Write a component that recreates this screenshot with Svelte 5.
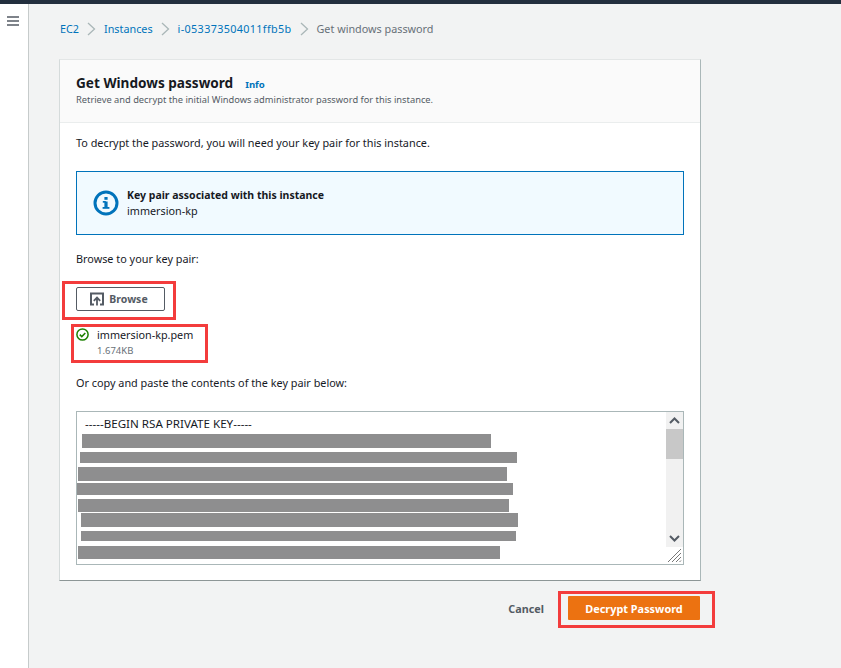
<script>
	// redaction bars over the key text, offsets relative to the textarea box
	const redactions = [
		{ left: 5, top: 22, width: 409, height: 14 },
		{ left: 3, top: 40, width: 437, height: 11 },
		{ left: 1, top: 55, width: 429, height: 14 },
		{ left: 0, top: 71, width: 436, height: 12 },
		{ left: 1, top: 87, width: 431, height: 13 },
		{ left: 4, top: 101, width: 437, height: 14 },
		{ left: 4, top: 119, width: 435, height: 10 },
		{ left: 1, top: 134, width: 422, height: 13 }
	];

	const crumbs = [
		{ label: 'EC2', cls: 'link' },
		{ label: 'Instances', cls: 'link' },
		{ label: 'i-053373504011ffb5b', cls: 'link id' }
	];
</script>

<div class="topbar"></div>
<div class="shell">
	<aside class="rail">
		<svg class="burger" width="12" height="10" viewBox="0 0 12 10">
			<path d="M0 1h12M0 5h12M0 9h12" stroke="#545b64" stroke-width="1.6" fill="none" />
		</svg>
	</aside>
	<main class="content">
		<nav class="crumbs">
			{#each crumbs as crumb}
				<span class={crumb.cls}>{crumb.label}</span>
				<svg class="sep" width="9" height="14" viewBox="0 0 9 14">
					<path d="M1 1l6.5 6L1 13" stroke="#aab7b8" stroke-width="1.3" fill="none" />
				</svg>
			{/each}
			<span class="current">Get windows password</span>
		</nav>

		<section class="card">
			<header class="card-head">
				<div class="title-row">
					<h1>Get Windows password</h1>
					<span class="info">Info</span>
				</div>
				<p>Retrieve and decrypt the initial Windows administrator password for this instance.</p>
			</header>
			<div class="card-body">
				<p class="line first">To decrypt the password, you will need your key pair for this instance.</p>

				<div class="alert">
					<svg width="26" height="26" viewBox="0 0 26 26">
						<circle cx="13" cy="13" r="11" fill="none" stroke="#0073bb" stroke-width="3" />
						<rect x="11.4" y="11.5" width="3.2" height="6.5" fill="#0073bb" />
						<rect x="9.6" y="17" width="6.8" height="1.8" fill="#0073bb" />
						<rect x="9.8" y="11" width="3" height="1.7" fill="#0073bb" />
						<rect x="11.4" y="7" width="3.2" height="2.8" fill="#0073bb" />
					</svg>
					<div>
						<div class="alert-title">Key pair associated with this instance</div>
						<div class="alert-text">immersion-kp</div>
					</div>
				</div>

				<p class="line browse-label">Browse to your key pair:</p>

				<div class="browse-wrap">
					<button class="browse">
						<svg width="14" height="14" viewBox="0 0 14 14">
							<path d="M4 12.5H1V1.5h12v11h-3" fill="none" stroke="#545b64" stroke-width="2" />
							<path d="M7 13.5V6M3.8 8.8L7 5.5l3.2 3.3" fill="none" stroke="#545b64" stroke-width="1.8" />
						</svg>
						Browse
					</button>
				</div>

				<div class="file">
					<svg width="13" height="13" viewBox="0 0 13 13">
						<circle cx="6.5" cy="6.5" r="5.6" fill="none" stroke="#1d8102" stroke-width="1.5" />
						<path d="M3.8 6.6l2 2 3.5-3.7" fill="none" stroke="#1d8102" stroke-width="1.5" />
					</svg>
					<div>
						<div class="file-name">immersion-kp.pem</div>
						<div class="file-size">1.674KB</div>
					</div>
				</div>

				<p class="line paste-label">Or copy and paste the contents of the key pair below:</p>

				<div class="keybox">
					<div class="keytext">-----BEGIN RSA PRIVATE KEY-----</div>
					{#each redactions as r}
						<div
							class="redact"
							style="left:{r.left}px;top:{r.top}px;width:{r.width}px;height:{r.height}px"
						></div>
					{/each}
					<div class="scrollbar">
						<svg class="arrow" width="17" height="17" viewBox="0 0 17 17">
							<path d="M4 11l4.5-4.5L13 11" fill="none" stroke="#545b64" stroke-width="2" />
						</svg>
						<div class="track"><div class="thumb"></div></div>
						<svg class="arrow" width="17" height="17" viewBox="0 0 17 17">
							<path d="M4 6l4.5 4.5L13 6" fill="none" stroke="#545b64" stroke-width="2" />
						</svg>
					</div>
					<svg class="grip" width="15" height="15" viewBox="0 0 15 15">
						<path d="M1 14L14 1M5 14L14 5M9 14l5-5M12.5 14l1.5-1.5" stroke="#777" stroke-width="1" fill="none" />
					</svg>
				</div>
			</div>
		</section>

		<footer class="actions">
			<button class="cancel">Cancel</button>
			<button class="primary">Decrypt Password</button>
		</footer>
	</main>
</div>

<div class="mark mark-browse"></div>
<div class="mark mark-file"></div>
<div class="mark mark-decrypt"></div>

<style>
	:global(body) {
		margin: 0;
		background: #f2f3f3;
		font-family: 'Noto Sans', 'Open Sans', sans-serif;
		font-size: 11px;
		color: #16191f;
	}

	.topbar {
		height: 4px;
		background: #232f3e;
	}

	.shell {
		display: flex;
		height: 664px;
		overflow: hidden;
	}

	.rail {
		width: 29px;
		flex: none;
		background: #fff;
		border-right: 1px solid #c6cbcb;
		padding-top: 12px;
		padding-left: 7px;
		box-sizing: border-box;
	}

	.burger {
		display: block;
	}

	.content {
		flex: none;
		width: 673px;
		padding-left: 30px;
	}

	.crumbs {
		display: flex;
		align-items: center;
		gap: 8px;
		height: 16px;
		margin-top: 17px;
		padding-left: 1px;
		font-size: 10.8px;
		line-height: 16px;
	}

	.link {
		color: #0073bb;
	}

	.id {
		letter-spacing: 0.35px;
	}

	.current {
		color: #687078;
	}

	.sep {
		flex: none;
	}

	.card {
		margin-top: 22px;
		width: 642px;
		height: 522px;
		box-sizing: border-box;
		background: #fff;
		border-top: 1px solid #e3e6e6;
		border-left: 1px solid #d5dbdb;
		border-right: 1px solid #aab7b8;
		border-bottom: 1px solid #8d9696;
	}

	.card-head {
		height: 63px;
		box-sizing: border-box;
		background: #fafafa;
		border-bottom: 1px solid #eaeded;
		padding: 13px 16px 0;
	}

	.title-row {
		display: flex;
		align-items: baseline;
		gap: 12px;
		height: 20px;
	}

	h1 {
		margin: 0;
		font-size: 13.6px;
		line-height: 20px;
		font-weight: 700;
		color: #16191f;
	}

	.info {
		font-size: 9.6px;
		font-weight: 700;
		color: #0073bb;
	}

	.card-head p {
		margin: 0;
		font-size: 9.3px;
		line-height: 14px;
		color: #545b64;
	}

	.card-body {
		padding: 0 16px;
	}

	.line {
		margin: 0;
		font-size: 10.85px;
		line-height: 16px;
	}

	.first {
		padding-top: 12px;
	}

	.alert {
		display: flex;
		align-items: center;
		gap: 7px;
		margin-top: 20px;
		height: 64px;
		box-sizing: border-box;
		padding-left: 16px;
		background: #f1faff;
		border: 1px solid #0073bb;
	}

	.alert svg {
		flex: none;
		margin-right: 1px;
	}

	.alert-title {
		font-weight: 700;
		font-size: 10.5px;
		line-height: 16px;
	}

	.alert-text {
		font-size: 10.8px;
		line-height: 16px;
	}

	.browse-label {
		margin-top: 16px;
	}

	.browse-wrap {
		margin-top: 20px;
	}

	.browse {
		display: flex;
		align-items: center;
		justify-content: center;
		gap: 5px;
		width: 89px;
		height: 24px;
		padding: 0 3px 0 0;
		box-sizing: border-box;
		background: #fff;
		border: 1px solid #545b64;
		border-radius: 2px;
		font-family: inherit;
		font-size: 10.5px;
		font-weight: 700;
		color: #545b64;
	}

	.file {
		display: flex;
		gap: 8px;
		margin-top: 16px;
	}

	.file svg {
		flex: none;
		margin-top: 1px;
	}

	.file-name {
		font-size: 10.8px;
		line-height: 15px;
	}

	.file-size {
		font-size: 9.5px;
		line-height: 15px;
		margin-top: 1px;
		color: #687078;
	}

	.paste-label {
		margin-top: 17px;
	}

	.keybox {
		position: relative;
		margin-top: 20px;
		height: 154px;
		width: 608px;
		box-sizing: border-box;
		border: 1px solid #aab7b8;
		background: #fff;
	}

	.keytext {
		padding: 4px 0 0 8px;
		font-size: 11.6px;
		line-height: 15px;
	}

	.redact {
		position: absolute;
		background: #8e8e8f;
	}

	.scrollbar {
		position: absolute;
		top: 0;
		right: 0;
		width: 17px;
		height: 135px;
		display: flex;
		flex-direction: column;
		background: #f1f1f1;
	}

	.arrow {
		flex: none;
		display: block;
	}

	.track {
		flex: 1;
	}

	.thumb {
		height: 30px;
		background: #c8c8c8;
	}

	.grip {
		position: absolute;
		right: 1px;
		bottom: 1px;
	}

	.actions {
		display: flex;
		justify-content: flex-end;
		align-items: center;
		gap: 24px;
		margin-top: 15px;
		width: 641px;
	}

	.cancel {
		padding: 0;
		border: 0;
		background: none;
		font-family: inherit;
		font-size: 10.8px;
		font-weight: 700;
		color: #545b64;
	}

	.primary {
		width: 132px;
		height: 24px;
		padding: 0;
		border: 0;
		border-radius: 1px;
		background: #ec7211;
		font-family: inherit;
		font-size: 10.9px;
		font-weight: 700;
		color: #fff;
	}

	.mark {
		position: absolute;
		box-sizing: border-box;
		border: 3px solid #f33c3c;
		pointer-events: none;
	}

	.mark-browse {
		left: 62px;
		top: 281px;
		width: 114px;
		height: 39px;
	}

	.mark-file {
		left: 71px;
		top: 324px;
		width: 137px;
		height: 39px;
	}

	.mark-decrypt {
		left: 558px;
		top: 591px;
		width: 157px;
		height: 37px;
	}
</style>
